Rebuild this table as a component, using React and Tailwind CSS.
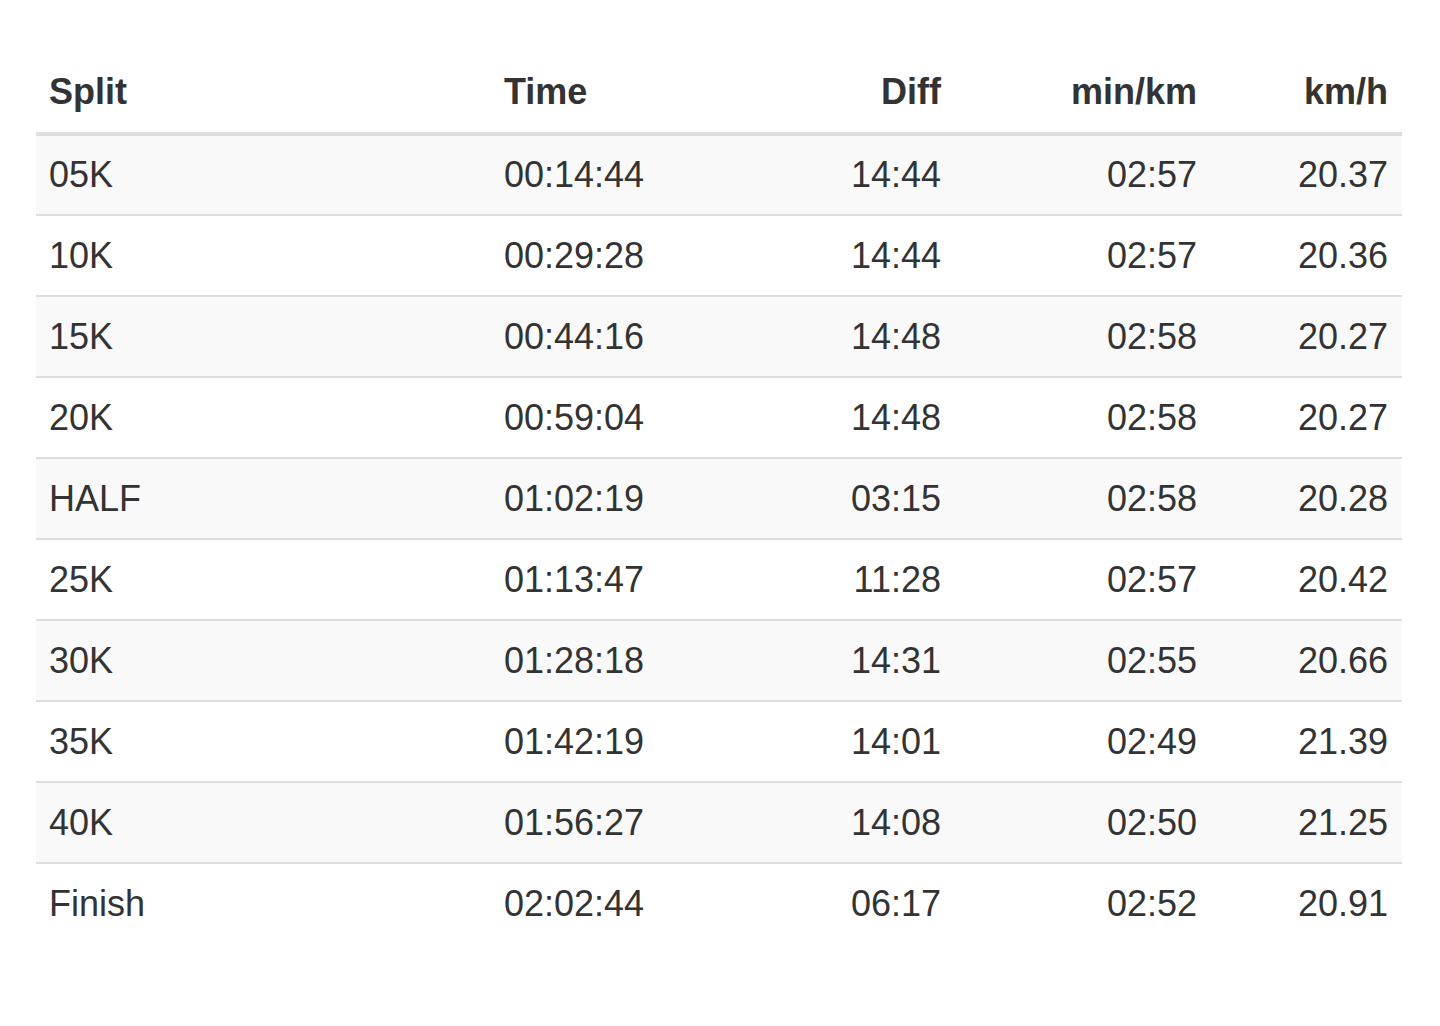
import React from "react";

const rows = [
  ["05K", "00:14:44", "14:44", "02:57", "20.37"],
  ["10K", "00:29:28", "14:44", "02:57", "20.36"],
  ["15K", "00:44:16", "14:48", "02:58", "20.27"],
  ["20K", "00:59:04", "14:48", "02:58", "20.27"],
  ["HALF", "01:02:19", "03:15", "02:58", "20.28"],
  ["25K", "01:13:47", "11:28", "02:57", "20.42"],
  ["30K", "01:28:18", "14:31", "02:55", "20.66"],
  ["35K", "01:42:19", "14:01", "02:49", "21.39"],
  ["40K", "01:56:27", "14:08", "02:50", "21.25"],
  ["Finish", "02:02:44", "06:17", "02:52", "20.91"],
];

export default function App() {
  return (
    <div
      className="min-h-[1026px] w-[1440px] bg-white pt-[52px] pl-[36px] text-[#333333]"
      style={{ fontFamily: '"Liberation Sans", Arial, Helvetica, sans-serif' }}
    >
      <table className="w-[1366px] table-fixed border-collapse text-[36px] leading-none">
        <colgroup>
          <col className="w-[455px]" />
          <col className="w-[250px]" />
          <col className="w-[213px]" />
          <col className="w-[256px]" />
          <col className="w-[192px]" />
        </colgroup>
        <thead>
          <tr className="h-[82px]">
            <th className="border-b-4 border-[#dddddd] px-[13px] text-left align-middle font-bold">Split</th>
            <th className="border-b-4 border-[#dddddd] px-[13px] text-left align-middle font-bold">Time</th>
            <th className="border-b-4 border-[#dddddd] px-[13px] text-right align-middle font-bold">Diff</th>
            <th className="border-b-4 border-[#dddddd] px-[13px] text-right align-middle font-bold">min/km</th>
            <th className="border-b-4 border-[#dddddd] pl-[13px] pr-[14px] text-right align-middle font-bold">km/h</th>
          </tr>
        </thead>
        <tbody>
          {rows.map((r, i) => (
            <tr
              key={r[0]}
              className={`h-[81px] ${i % 2 === 0 ? "bg-[#f9f9f9]" : "bg-white"}`}
            >
              <td className="border-t-2 border-[#dddddd] px-[13px] text-left align-middle">{r[0]}</td>
              <td className="border-t-2 border-[#dddddd] px-[13px] text-left align-middle">{r[1]}</td>
              <td className="border-t-2 border-[#dddddd] px-[13px] text-right align-middle">{r[2]}</td>
              <td className="border-t-2 border-[#dddddd] px-[13px] text-right align-middle">{r[3]}</td>
              <td className="border-t-2 border-[#dddddd] pl-[13px] pr-[14px] text-right align-middle">{r[4]}</td>
            </tr>
          ))}
        </tbody>
      </table>
    </div>
  );
}
